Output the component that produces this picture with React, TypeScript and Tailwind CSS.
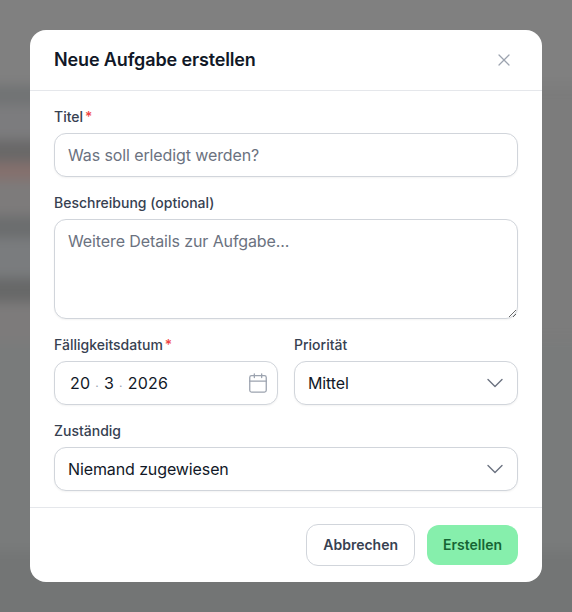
import { X, Calendar, ChevronDown } from 'lucide-react';

function Label({ text, required }: { text: string; required?: boolean }) {
  return (
    <label className="block text-sm leading-5 font-medium text-[#374151] mb-1.5">
      {text}
      {required && <span className="text-[#ef4444] ml-0.5">*</span>}
    </label>
  );
}

function SelectBox({ value }: { value: string }) {
  return (
    <div className="h-11 flex items-center justify-between pl-[13px] pr-2 bg-white border border-[#d1d5db] rounded-xl shadow-xs">
      <span className="text-base tracking-[-0.11px] text-[#111827]">{value}</span>
      <ChevronDown size={28} strokeWidth={1.2} className="text-[#6b7280]" />
    </div>
  );
}

export default function App() {
  return (
    <div
      className="relative w-[572px] h-[612px] overflow-hidden bg-[#7c7c7c]"
      style={{ fontFamily: 'Inter, sans-serif' }}
    >
      {/* Blurred page behind the dialog */}
      <div className="flex flex-col h-[660px] -mx-4 -mt-6 blur-[6px]">
        <div className="h-[109px] bg-[#808080]" />
        <div className="h-[20px] w-[90px] bg-[#717374]" />
        <div className="h-[35px] w-[90px] bg-[#7c7c7e]" />
        <div className="h-[22px] w-[90px] bg-[#696868]" />
        <div className="h-[18px] w-[90px] bg-[#85706d]" />
        <div className="h-[36px] w-[90px] bg-[#7d7b7b]" />
        <div className="h-[22px] w-[90px] bg-[#6b6d6e]" />
        <div className="h-[40px] w-[90px] bg-[#7a7c7e]" />
        <div className="h-[24px] w-[90px] bg-[#676868]" />
        <div className="h-[40px] w-[90px] bg-[#7d7b7b]" />
        <div className="flex-1 w-full bg-[#797b7b]" />
        <div className="h-[85px] bg-[#737575]" />
      </div>

      {/* Dialog */}
      <div className="absolute inset-0 flex items-center justify-center">
        <div className="w-[512px] bg-white rounded-2xl">
          <div className="h-[61px] flex items-center justify-between pl-6 pr-7 border-b border-[#e5e7eb]">
            <h2 className="text-lg tracking-[-0.14px] font-semibold text-[#111827]">Neue Aufgabe erstellen</h2>
            <X size={20} strokeWidth={1.5} className="text-[#9ca3af]" />
          </div>

          <form className="px-6 pt-4 pb-4 flex flex-col gap-4">
            <div>
              <Label text="Titel" required />
              <input
                className="block w-full h-11 px-[13px] bg-white border border-[#d1d5db] rounded-xl shadow-xs text-base tracking-[-0.11px] outline-none placeholder:text-[#6b7280]"
                placeholder="Was soll erledigt werden?"
              />
            </div>
            <div>
              <Label text="Beschreibung (optional)" />
              <textarea
                className="block w-full h-[100px] px-[13px] py-[9px] bg-white border border-[#d1d5db] rounded-xl shadow-xs text-base tracking-[-0.11px] outline-none placeholder:text-[#6b7280]"
                placeholder="Weitere Details zur Aufgabe..."
              />
            </div>
            <div className="grid grid-cols-2 gap-4">
              <div>
                <Label text="Fälligkeitsdatum" required />
                <div className="h-11 flex items-center justify-between pl-[15px] pr-2 bg-white border border-[#d1d5db] rounded-xl shadow-xs">
                  <span className="text-base tracking-[0.2px] text-[#111827] flex items-center gap-[5px]">
                    <span>20</span>
                    <span className="text-[#9ca3af] text-xs">.</span>
                    <span>3</span>
                    <span className="text-[#9ca3af] text-xs">.</span>
                    <span>2026</span>
                  </span>
                  <Calendar size={22} strokeWidth={1.4} className="text-[#9ca3af]" />
                </div>
              </div>
              <div>
                <Label text="Priorität" />
                <SelectBox value="Mittel" />
              </div>
            </div>
            <div>
              <Label text="Zuständig" />
              <SelectBox value="Niemand zugewiesen" />
            </div>
          </form>

          <div className="h-[75px] flex items-center justify-end gap-3 px-6 border-t border-[#e5e7eb]">
            <button className="h-[42px] px-4 bg-white border border-[#d1d5db] rounded-xl text-sm font-semibold text-[#374151]">
              Abbrechen
            </button>
            <button className="h-10 px-4 bg-[#86efac] rounded-xl text-sm font-semibold text-[#166534]">
              Erstellen
            </button>
          </div>
        </div>
      </div>
    </div>
  );
}
